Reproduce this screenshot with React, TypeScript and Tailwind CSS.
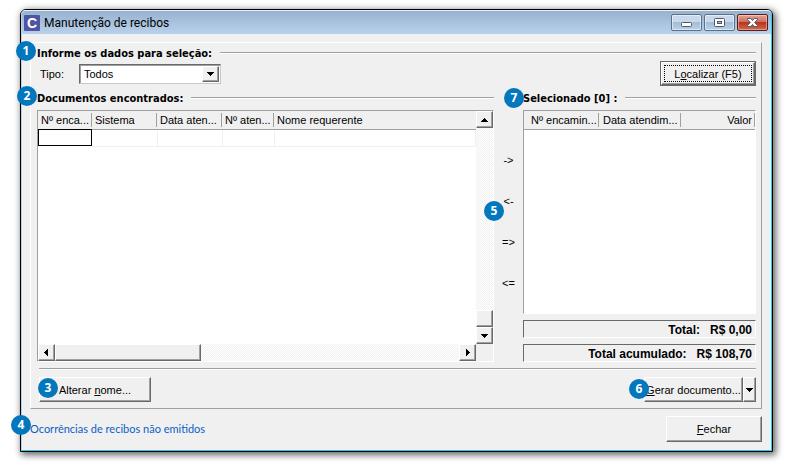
import React, { useState } from 'react';
import clsx from 'clsx';

const RAISED =
  'bg-[#f0f0f0] border border-t-white border-l-white border-r-[#696969] border-b-[#696969] shadow-[inset_-1px_-1px_0_#a0a0a0]';

interface BadgeProps {
  n: number;
  className: string;
}

// Numbered callout, placed over the control it explains
const Badge: React.FC<BadgeProps> = ({ n, className }) => (
  <span
    className={clsx(
      "absolute z-10 flex size-5 items-center justify-center rounded-full bg-[#0277bd] font-['Open_Sans',sans-serif] text-xs font-bold text-white",
      className
    )}
  >
    {n}
  </span>
);

interface HeadingProps {
  n: number;
  badgeClass: string;
  className: string;
  children: React.ReactNode;
}

const Heading: React.FC<HeadingProps> = ({ n, badgeClass, className, children }) => (
  <div className={clsx('relative flex items-center gap-2', className)}>
    <Badge n={n} className={badgeClass} />
    <h2 className="pt-px whitespace-pre font-['DejaVu_Sans_Condensed','DejaVu_Sans',sans-serif] text-[11px] font-bold leading-4">{children}</h2>
    <div className="h-[2px] flex-1 border-t border-[#a0a0a0] bg-white" />
  </div>
);

type Direction = 'up' | 'down' | 'left' | 'right';

const ARROWS: Record<Direction, string> = {
  up: 'M0 6h7v-1h-1v-1h-1v-1h-1v-1h-1v1h-1v1h-1v1h-1z',
  down: 'M0 2h7v1h-1v1h-1v1h-1v1h-1v-1h-1v-1h-1v-1h-1z',
  left: 'M5 0v7h-1v-1h-1v-1h-1v-1h-1v-1h1v-1h1v-1h1v-1z',
  right: 'M2 0v7h1v-1h1v-1h1v-1h1v-1h-1v-1h-1v-1h-1v-1z',
};

const Arrow: React.FC<{ dir: Direction }> = ({ dir }) => (
  <svg width="7" height="7" viewBox="0 0 7 7" shapeRendering="crispEdges" aria-hidden="true">
    <path d={ARROWS[dir]} fill="#000" />
  </svg>
);

const ScrollButton: React.FC<{ dir: Direction; label: string }> = ({ dir, label }) => (
  <button type="button" aria-label={label} className={clsx(RAISED, 'flex size-[17px] shrink-0 items-center justify-center')}>
    <Arrow dir={dir} />
  </button>
);

const TRACK = 'bg-[repeating-conic-gradient(#f0f0f0_0_25%,#ffffff_0_50%)] bg-[length:2px_2px]';

interface Column {
  title: string;
  width: string;
}

const foundColumns: Column[] = [
  { title: 'Nº enca...', width: 'w-[54px]' },
  { title: 'Sistema', width: 'w-[65px]' },
  { title: 'Data aten...', width: 'w-[65px]' },
  { title: 'Nº aten...', width: 'w-[52px]' },
  { title: 'Nome requerente', width: 'w-auto' },
];

const selectedColumns: Column[] = [
  { title: 'Nº encamin...', width: 'w-[75px]' },
  { title: 'Data atendim...', width: 'w-[82px]' },
  { title: 'Valor', width: 'w-auto' },
];

const moves = [
  { text: '->', label: 'Selecionar' },
  { text: '<-', label: 'Remover' },
  { text: '=>', label: 'Selecionar todos' },
  { text: '<=', label: 'Remover todos' },
];

const TotalBox: React.FC<{ label: string; value: string }> = ({ label, value }) => (
  <div className="flex h-[18px] items-center justify-end gap-[10px] border border-t-[#696969] border-l-[#696969] border-r-white border-b-white pt-px pr-[3px] text-[12px] font-bold">
    <span>{label}</span>
    <span>{value}</span>
  </div>
);

const TitleBar = () => (
  <header className="flex h-6 items-center gap-1 rounded-t-[4px] border-t border-white/70 bg-gradient-to-b from-[#97b2d0] to-[#b9d1ea] pr-[3px] pl-[2px]">
    <span className="flex size-4 items-center justify-center rounded-[1px] bg-[#4f55a5] text-[14px] font-bold leading-4 text-white">
      C
    </span>
    <h1 className="flex-1 font-['Roboto',sans-serif] text-[12px] leading-4">Manutenção de recibos</h1>
    <div className="flex gap-[2px]">
      <button
        type="button"
        aria-label="Minimizar"
        className="flex h-[17px] w-[31px] items-center justify-center rounded-[2px] border border-[#5b7188] bg-[linear-gradient(#c9d9eb_45%,#a3bdd9_50%,#b9d1ea)] shadow-[inset_0_0_0_1px_#ffffff80]"
      >
        <svg width="11" height="9" viewBox="0 0 11 9" aria-hidden="true">
          <rect x="0.5" y="4.5" width="10" height="4" rx="1" fill="#fff" stroke="#535666" />
        </svg>
      </button>
      <button
        type="button"
        aria-label="Maximizar"
        className="flex h-[17px] w-[31px] items-center justify-center rounded-[2px] border border-[#5b7188] bg-[linear-gradient(#c9d9eb_45%,#a3bdd9_50%,#b9d1ea)] shadow-[inset_0_0_0_1px_#ffffff80]"
      >
        <svg width="11" height="9" viewBox="0 0 11 9" aria-hidden="true">
          <rect x="0.5" y="0.5" width="10" height="8" rx="1" fill="#fff" stroke="#535666" />
          <rect x="3.5" y="3.5" width="4" height="2" fill="#a9c0da" stroke="#535666" />
        </svg>
      </button>
      <button
        type="button"
        aria-label="Fechar janela"
        className="flex h-[17px] w-[31px] items-center justify-center rounded-[2px] border border-[#5c1a1c] bg-[linear-gradient(#e0a597,#cf6f5c_45%,#b8351d_50%,#d2694b)] shadow-[inset_0_0_0_1px_#ffffff60]"
      >
        <svg width="11" height="9" viewBox="0 0 11 9" aria-hidden="true">
          <path
            d="M.5.5h3.200L5.500 2.500 7.300.5h3.200v1L7.700 4.500l2.800 3v1H7.300L5.500 6.500 3.700 8.500H.5v-1l2.800-3-2.800-3z"
            fill="#fff"
            stroke="#535666"
          />
        </svg>
      </button>
    </div>
  </header>
);

const FoundList = () => (
  <div className="flex flex-1 flex-col border border-t-[#a0a0a0] border-l-[#a0a0a0] border-r-white border-b-white bg-white">
    <div className="flex flex-1">
      <div className="min-w-0 flex-1">
        <table className="w-full table-fixed border-collapse">
          <thead>
            <tr className="h-[18px] bg-[#f0f0f0]">
              {foundColumns.map((col, i) => (
                <th key={col.title} scope="col" className={clsx(col.width, 'border-b border-[#a0a0a0] p-0 text-left font-normal')}>
                  <span
                    className={clsx(
                      'block h-[14px] overflow-hidden pl-[3px] leading-[14px] whitespace-nowrap',
                      i < foundColumns.length - 1 && 'border-r border-[#a0a0a0]'
                    )}
                  >
                    {col.title}
                  </span>
                </th>
              ))}
            </tr>
          </thead>
          <tbody>
            <tr className="h-[17px]">
              {foundColumns.map((col, i) => (
                <td
                  key={col.title}
                  className={clsx('p-0', i === 0 ? 'outline outline-black -outline-offset-1' : 'border-r border-b border-[#f0f0f0]')}
                />
              ))}
            </tr>
          </tbody>
        </table>
      </div>
      <div className={clsx(TRACK, 'flex w-[17px] flex-col')}>
        <ScrollButton dir="up" label="Rolar para cima" />
        <div className="flex-1" />
        <div className={clsx(RAISED, 'h-[17px]')} />
        <ScrollButton dir="down" label="Rolar para baixo" />
      </div>
    </div>
    <div className="flex bg-[#f0f0f0]">
      <div className={clsx(TRACK, 'flex flex-1')}>
        <ScrollButton dir="left" label="Rolar para a esquerda" />
        <div className={clsx(RAISED, 'w-1/3')} />
        <div className="flex-1" />
        <ScrollButton dir="right" label="Rolar para a direita" />
      </div>
      <div className="w-[17px]" />
    </div>
  </div>
);

const SelectedList = () => (
  <div className="flex-1 border border-t-[#a0a0a0] border-l-[#a0a0a0] border-r-white border-b-white bg-white">
    <table className="w-full table-fixed border-collapse">
      <thead>
        <tr className="h-[18px] bg-[#f0f0f0]">
          {selectedColumns.map((col, i) => (
            <th key={col.title} scope="col" className={clsx(col.width, 'border-b border-[#a0a0a0] p-0 font-normal')}>
              <span
                className={clsx(
                  'block h-[14px] overflow-hidden border-r border-[#a0a0a0] leading-[14px] whitespace-nowrap',
                  i === 0 && 'pl-[7px] text-left',
                  i === 1 && 'pl-1 text-left',
                  i === 2 && 'pr-[2px] text-right'
                )}
              >
                {col.title}
              </span>
            </th>
          ))}
        </tr>
      </thead>
    </table>
  </div>
);

export default function App() {
  const [tipo, setTipo] = useState('Todos');

  return (
    <div className="flex min-h-screen bg-white pt-[9px] pr-[13px] pb-[13px] pl-5 font-['Liberation_Sans',Arial,sans-serif] text-[11px] leading-4 text-black">
      <main className="flex min-w-0 flex-1 flex-col rounded-t-[6px] border border-black bg-[#f0f0f0] shadow-[2px_2px_7px_1px_rgba(0,0,0,0.6)]">
        <div className="flex flex-1 flex-col rounded-t-[5px] border-x border-b border-l-[#b9d1ea] border-r-[#25cdef] border-b-[#25cdef]">
          <TitleBar />

          <div className="flex flex-1 flex-col pt-2 pr-[9px] pb-2 pl-2">
            <section className="flex flex-1 flex-col border border-t-white border-l-white border-r-[#a0a0a0] border-b-[#a0a0a0] pt-[2px] pr-[5px] pb-[6px] pl-[6px]">
              <Heading n={1} badgeClass="-left-[21px] -top-1" className="h-4">
                Informe os dados para seleção:
              </Heading>

              <div className="flex h-[25px] items-center">
                <label htmlFor="tipo" className="w-[42px] pl-[3px]">
                  Tipo:
                </label>
                <div className="relative">
                  <select
                    id="tipo"
                    value={tipo}
                    onChange={(e) => setTipo(e.target.value)}
                    className="block h-5 w-[142px] appearance-none border border-t-[#696969] border-l-[#696969] border-r-[#c8c8c8] border-b-[#c8c8c8] bg-white pl-1 shadow-[inset_1px_1px_0_#a0a0a0]"
                  >
                    <option>Todos</option>
                  </select>
                  <span className={clsx(RAISED, 'pointer-events-none absolute top-[2px] right-[2px] flex h-4 w-[17px] items-center justify-center')}>
                    <Arrow dir="down" />
                  </span>
                </div>
                <button type="button" className="ml-auto h-[25px] w-24 border border-[#696969]">
                  <span className={clsx(RAISED, 'flex h-full items-center justify-center p-[2px]')}>
                    <span className="flex h-full flex-1 items-center justify-center border border-dotted border-black">
                      <span>
                        L<u>o</u>calizar (F5)
                      </span>
                    </span>
                  </span>
                </button>
              </div>

              <div className="flex flex-1">
                <div className="flex min-w-0 flex-1 flex-col">
                  <Heading n={2} badgeClass="-left-5 top-0" className="h-6">
                    Documentos encontrados:
                  </Heading>
                  <FoundList />
                </div>

                <div className="relative flex w-[29px] flex-col items-center gap-[25px] pt-[66px]">
                  {moves.map((move) => (
                    <button key={move.text} type="button" aria-label={move.label} className="h-4 w-full">
                      {move.text}
                    </button>
                  ))}
                  <Badge n={5} className="top-[115px] -left-[10px]" />
                </div>

                <div className="flex w-[233px] flex-col">
                  <Heading n={7} badgeClass="-left-[19px] top-[2px]" className="h-6">
                    {'Selecionado [0] :'}
                  </Heading>
                  <SelectedList />
                  <div className="flex flex-col gap-[6px] pt-[6px]">
                    <TotalBox label="Total:" value="R$ 0,00" />
                    <TotalBox label="Total acumulado:" value="R$ 108,70" />
                  </div>
                </div>
              </div>

              <div className="mt-[6px] ml-[2px] h-[2px] border-t border-[#a0a0a0] bg-white" />

              <div className="flex justify-between pt-[7px] pl-[2px]">
                <div className="relative">
                  <Badge n={3} className="top-[1px] -left-px" />
                  <button type="button" className={clsx(RAISED, 'h-[25px] w-28')}>
                    Alterar <u>n</u>ome...
                  </button>
                </div>
                <div className="relative flex">
                  <Badge n={6} className="top-[2px] -left-[15px]" />
                  <button type="button" className={clsx(RAISED, 'h-[25px] w-[99px] whitespace-nowrap')}>
                    <u>G</u>erar documento...
                  </button>
                  <button type="button" aria-label="Mais opções" className={clsx(RAISED, 'flex h-[25px] w-[13px] items-center justify-center')}>
                    <Arrow dir="down" />
                  </button>
                </div>
              </div>
            </section>

            <footer className="flex items-center justify-between pt-[7px]">
              <div className="relative">
                <Badge n={4} className="-top-[6px] -left-[19px]" />
                <a href="#ocorrencias" className="font-['Lato',sans-serif] text-[11px] text-[#0b5fc4]">
                  Ocorrências de recibos não emitidos
                </a>
              </div>
              <button type="button" className={clsx(RAISED, 'h-[26px] w-24')}>
                <u>F</u>echar
              </button>
            </footer>
          </div>
        </div>
      </main>
    </div>
  );
}
